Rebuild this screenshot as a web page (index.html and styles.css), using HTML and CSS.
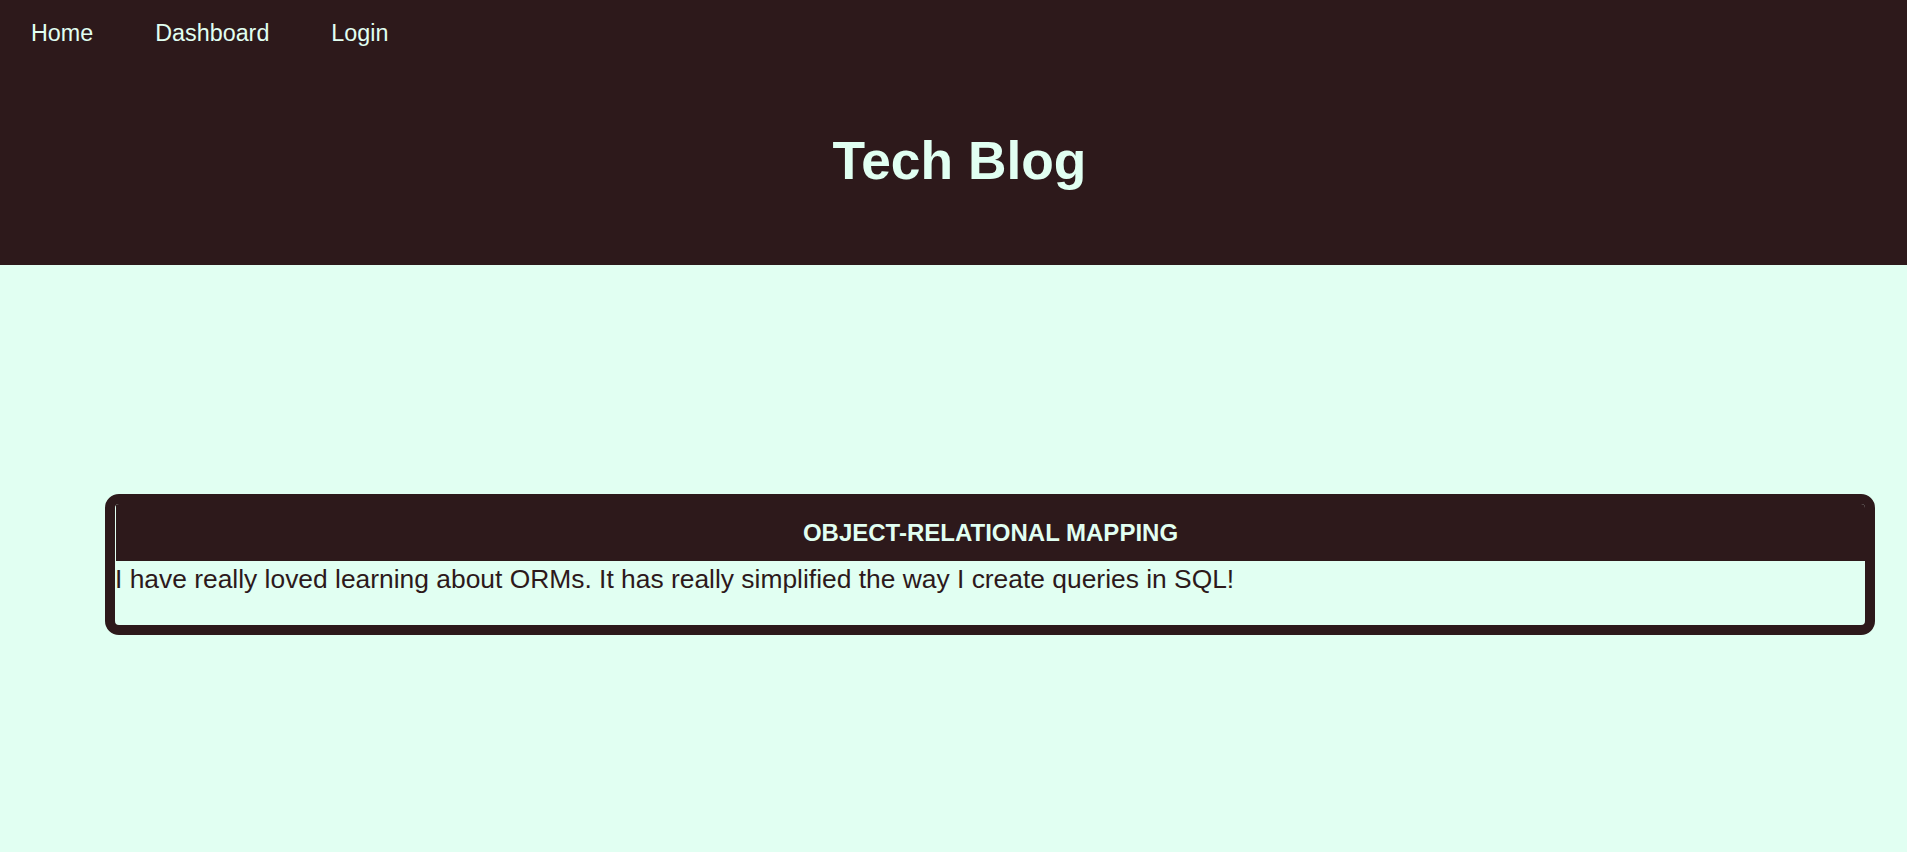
FILE: index.html
```html
<!DOCTYPE html>
<html lang="en">
<head>
<meta charset="utf-8">
<title>Tech Blog</title>
<link rel="stylesheet" href="styles.css">
</head>
<body>
<header class="site-header">
  <nav class="nav">
    <a class="nav-link" href="#">Home</a>
    <a class="nav-link" href="#">Dashboard</a>
    <a class="nav-link" href="#">Login</a>
  </nav>
  <h1 class="site-title">Tech Blog</h1>
</header>
<main class="main">
  <article class="post">
    <h2 class="post-title">Object-Relational Mapping</h2>
    <p class="post-body">I have really loved learning about ORMs. It has really simplified the way I create queries in SQL!</p>
  </article>
</main>
</body>
</html>
```

FILE: styles.css
```css
html, body {
  margin: 0;
  padding: 0;
}

body {
  background: #e1fff2;
  color: #2d191b;
  font-family: "Liberation Sans", Arial, sans-serif;
  min-height: 852px;
}

.site-header {
  background: #2d191b;
  height: 265px;
  display: flex;
  flex-direction: column;
}

.nav {
  display: flex;
  gap: 62px;
  padding: 20px 0 0 31px;
  height: 28px;
}

.nav-link {
  color: #e1fff2;
  text-decoration: none;
  font-size: 23.33px;
  line-height: 27px;
}

.site-title {
  margin: 0;
  margin-top: 82px;
  padding-left: 12px;
  text-align: center;
  color: #e1fff2;
  font-size: 53.33px;
  line-height: 62px;
  font-weight: bold;
}

.main {
  padding: 229px 32px 0 105px;
}

.post {
  border: 10px solid #2d191b;
  border-radius: 14px;
  background: #e1fff2;
  overflow: hidden;
}

.post-title {
  margin: 0 0 0 1px;
  background: #2d191b;
  color: #e1fff2;
  text-align: center;
  text-transform: uppercase;
  font-size: 24px;
  font-weight: bold;
  height: 57px;
  line-height: 57px;
}

.post-body {
  margin: 0;
  padding: 4px 0 0 0;
  height: 60px;
  font-size: 26.4px;
  line-height: 28px;
  color: #2d191b;
}
```
